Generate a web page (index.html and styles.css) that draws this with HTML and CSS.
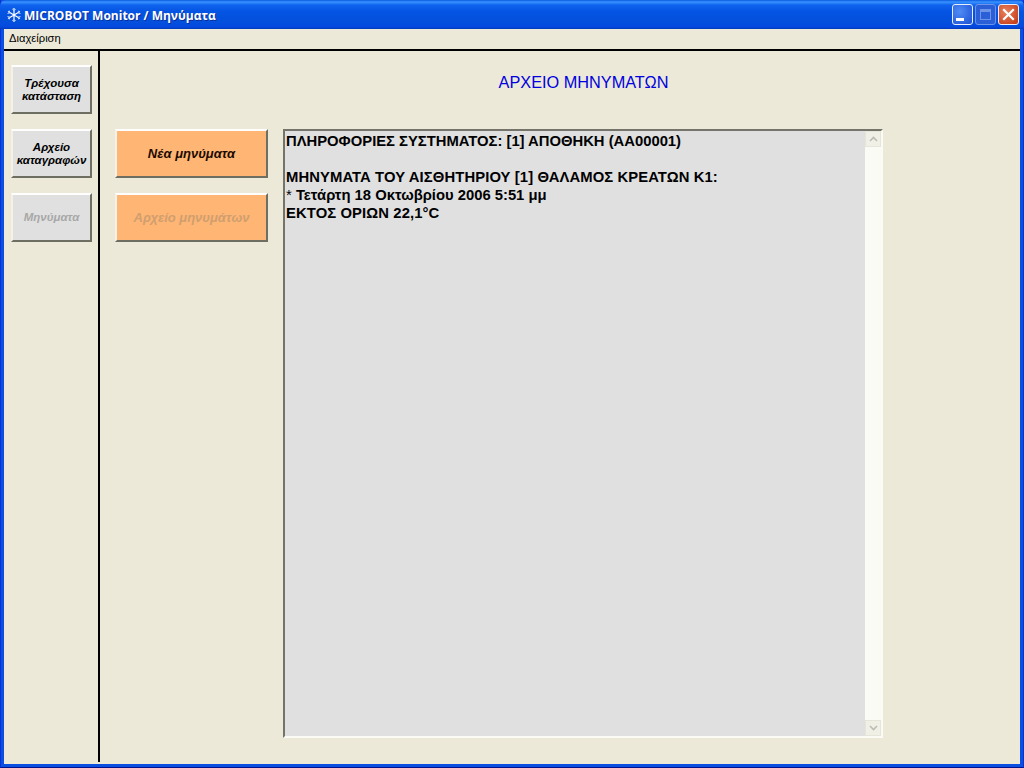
FILE: index.html
```html
<!DOCTYPE html>
<html lang="el">
<head>
<meta charset="utf-8">
<title>MICROBOT Monitor / Μηνύματα</title>
<link rel="stylesheet" href="styles.css">
</head>
<body>
<div class="window">
  <header class="titlebar">
    <svg class="app-icon" width="16" height="16" viewBox="0 0 16 16" fill="none" stroke="#fff" stroke-width="1.2">
      <path d="M8 1v14M2 4.500l12 7M14 4.500l-12 7"/>
      <path d="M6.300 2l1.700 1.700L9.700 2M6.300 14l1.700-1.700L9.700 14M1.500 6.500l2.400-.6-.6-2.300M14.500 9.500l-2.400.6.6 2.300M14.500 6.500l-2.400-.6.6-2.300M1.500 9.500l2.400.6-.6 2.300" stroke="#bcd8f8" stroke-width="1"/>
    </svg>
    <span class="title-text">MICROBOT Monitor / Μηνύματα</span>
    <div class="caption-buttons">
      <div class="cap cap-min"><span class="min-glyph"></span></div>
      <div class="cap cap-max"><span class="max-glyph"></span></div>
      <div class="cap cap-close">
        <svg width="13" height="13" viewBox="0 0 13 13" stroke="#fff" stroke-width="2.200" stroke-linecap="square"><path d="M2 2l9 9M11 2l-9 9"/></svg>
      </div>
    </div>
  </header>
  <nav class="menubar"><span class="menu-item">Διαχείριση</span></nav>
  <div class="content">
    <aside class="sidebar">
      <button class="btn btn-grey">Τρέχουσα<br>κατάσταση</button>
      <button class="btn btn-grey">Αρχείο<br>καταγραφών</button>
      <button class="btn btn-grey is-disabled">Μηνύματα</button>
    </aside>
    <main class="main">
      <h1 class="heading">ΑΡΧΕΙΟ ΜΗΝΥΜΑΤΩΝ</h1>
      <div class="panes">
        <div class="tabs">
          <button class="btn btn-orange">Νέα μηνύματα</button>
          <button class="btn btn-orange is-disabled">Αρχείο μηνυμάτων</button>
        </div>
        <div class="messages">
          <div class="message-text">
            <div class="line">ΠΛΗΡΟΦΟΡΙΕΣ ΣΥΣΤΗΜΑΤΟΣ: [1] ΑΠΟΘΗΚΗ (ΑΑ00001)</div>
            <div class="line blank"></div>
            <div class="line line-wide">ΜΗΝΥΜΑΤΑ ΤΟΥ ΑΙΣΘΗΤΗΡΙΟΥ [1] ΘΑΛΑΜΟΣ ΚΡΕΑΤΩΝ Κ1:</div>
            <div class="line"><span class="bullet">*</span> Τετάρτη 18 Οκτωβρίου 2006 5:51 μμ</div>
            <div class="line line-wide">ΕΚΤΟΣ ΟΡΙΩΝ 22,1°C</div>
          </div>
          <div class="scrollbar">
            <div class="scroll-btn"><svg width="9" height="6" viewBox="0 0 9 6" fill="none" stroke="#b9bdb4" stroke-width="1.600"><path d="M1 5l3.500-3.500L8 5"/></svg></div>
            <div class="scroll-track"></div>
            <div class="scroll-btn"><svg width="9" height="6" viewBox="0 0 9 6" fill="none" stroke="#b9bdb4" stroke-width="1.600"><path d="M1 1l3.500 3.500L8 1"/></svg></div>
          </div>
        </div>
      </div>
    </main>
  </div>
</div>
</body>
</html>
```
FILE: styles.css
```css
* { box-sizing: border-box; }
html, body { margin: 0; padding: 0; }
body { width: 1024px; height: 768px; overflow: hidden; font-family: "Liberation Sans", Arial, sans-serif; }

.window {
  width: 1024px;
  height: 768px;
  display: flex;
  flex-direction: column;
  background: #0a4fe0;
  padding: 0 3px 3px 3px;
  border-left: 1px solid #0831d9;
  border-right: 1px solid #0831d9;
  border-bottom: 1px solid #00138c;
}

.titlebar {
  flex: 0 0 29px;
  margin: 0 -4px;
  padding: 0 5px 0 6px;
  display: flex;
  align-items: center;
  background: linear-gradient(to bottom, #0a5ae0 0, #3a93ff 2px, #0f63ee 5px, #0453e2 12px, #0450dc 22px, #0549e0 27px, #0339b8 29px);
  border-radius: 6px 6px 0 0;
}
.app-icon { flex: none; margin-right: 2px; }
.title-text {
  color: #fff;
  font-family: "Open Sans", "Noto Sans", sans-serif;
  font-weight: 700;
  font-size: 12px;
  line-height: 16px;
  padding-top: 3px;
  white-space: nowrap;
  text-shadow: 1px 1px 0 #0a2f9a;
}
.caption-buttons { margin-left: auto; display: flex; gap: 2px; }
.cap {
  width: 21px;
  height: 21px;
  border: 1px solid #e8eefc;
  border-radius: 3px;
  display: flex;
  align-items: center;
  justify-content: center;
  position: relative;
}
.cap-min { background: radial-gradient(circle at 35% 35%, #4f8df5, #2458d8 85%); }
.cap-max { background: #2a5fd8; border-color: #6e94e8; }
.cap-close { background: radial-gradient(circle at 35% 35%, #e8815c, #c6401c 85%); }
.min-glyph { width: 8px; height: 3px; background: #fff; margin: 9px 5px 0 0; }
.max-glyph { width: 11px; height: 11px; border: 1px solid #6e94e8; border-top-width: 3px; }

.menubar {
  flex: 0 0 20px;
  background: #ece9d8;
  padding: 2px 0 0 5px;
  font-size: 11.200px;
  line-height: 14px;
  color: #000;
}

.content {
  flex: 1;
  min-height: 0;
  display: flex;
  background: #ece9d8;
  border-top: 2px solid #000;
}

.sidebar {
  flex: 0 0 96px;
  height: 711px;
  border-right: 2px solid #000;
  padding: 14px 6px 0 7px;
  display: flex;
  flex-direction: column;
  gap: 15px;
}
.sidebar .btn { width: 81px; }

.btn {
  height: 49px;
  padding: 0;
  font-family: "Liberation Sans", sans-serif;
  font-weight: 700;
  font-style: italic;
  font-size: 11.500px;
  line-height: 13px;
  color: #000;
  border: 2px solid;
  border-color: #fff #6e6e62 #6e6e62 #f4f2e8;
}
.btn-grey { background: #e0e0e0; }
.btn-orange { background: #ffb573; font-size: 13px; width: 153px; color: #1c0a00; }
.btn.is-disabled { color: #a8a8a8; }
.btn-orange.is-disabled { color: #cf9f70; }

.main { flex: 1; min-width: 0; display: flex; flex-direction: column; }
.heading {
  margin: 0;
  height: 78px;
  padding: 22px 0 0 0;
  width: 967px;
  text-align: center;
  font-size: 16.300px;
  line-height: 18px;
  font-weight: 400;
  color: #0000e0;
}
.panes { display: flex; gap: 15px; padding-left: 15px; }
.tabs { display: flex; flex-direction: column; gap: 15px; }

.messages {
  width: 600px;
  height: 609px;
  display: flex;
  background: #e0e0e0;
  border: 2px solid;
  border-color: #74746a #fbfaf4 #fbfaf4 #74746a;
}
.message-text {
  flex: 1;
  padding: 1px 0 0 1px;
  font-size: 14.800px;
  line-height: 18px;
  font-weight: 700;
  color: #000;
  white-space: nowrap;
}
.line { height: 18px; }
.line-wide { letter-spacing: .11px; }
.bullet { font-weight: 400; }
.scrollbar {
  flex: 0 0 16px;
  display: flex;
  flex-direction: column;
  background: #f8f8f2;
}
.scroll-btn {
  flex: 0 0 16px;
  display: flex;
  align-items: center;
  justify-content: center;
  background: #f1f0e6;
  border: 1px solid #e6e5da;
}
.scroll-track { flex: 1; background: #fbfbf6; }
```
